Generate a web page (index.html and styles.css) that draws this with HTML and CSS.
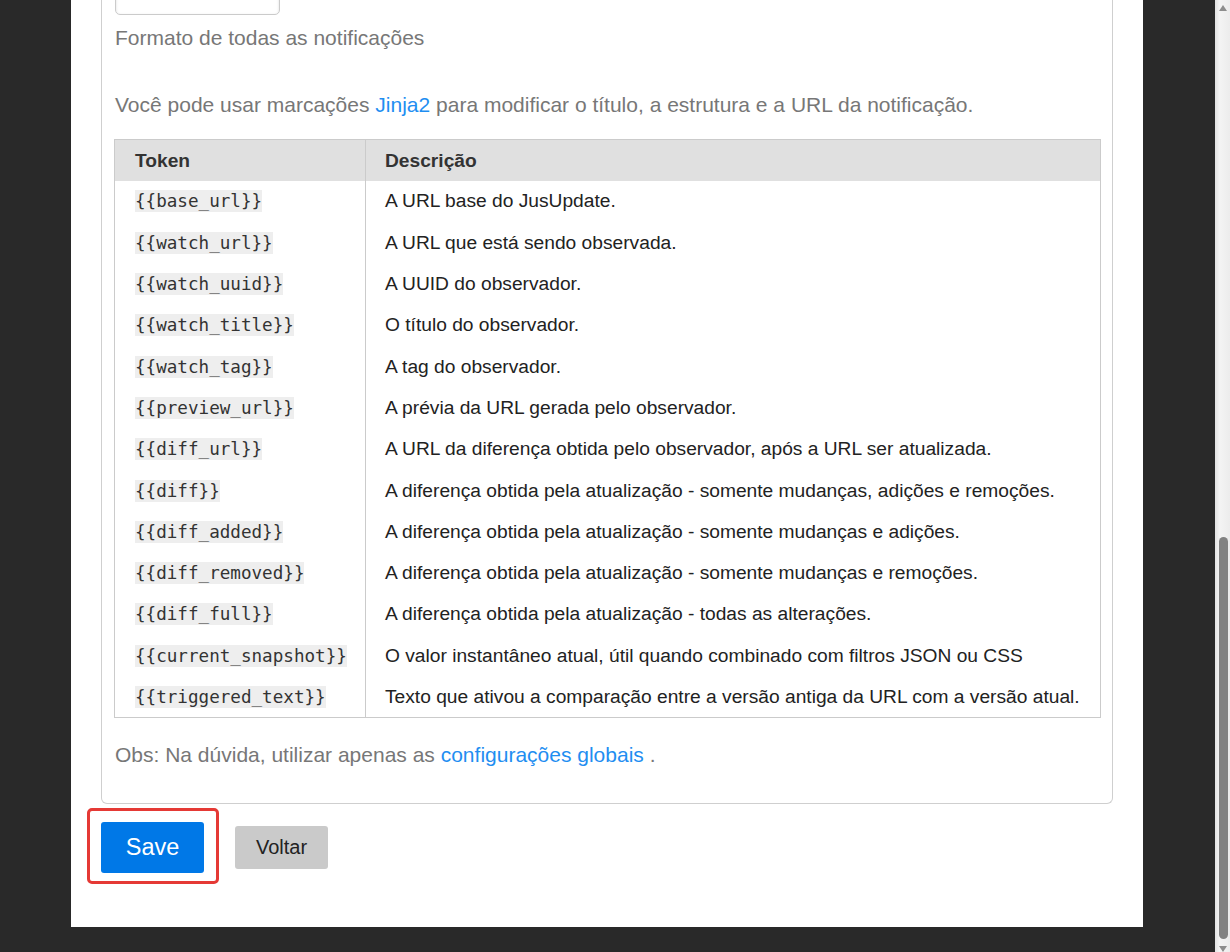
FILE: index.html
```html
<!DOCTYPE html>
<html lang="pt-BR">
<head>
<meta charset="utf-8">
<title>Notificações</title>
<link rel="stylesheet" href="styles.css">
</head>
<body>
<div class="viewport">
  <div class="page">
    <div class="card">
      <div class="fake-input"></div>
      <p class="hint">Formato de todas as notificações</p>
      <p class="hint intro">Você pode usar marcações <a href="#">Jinja2</a> para modificar o título, a estrutura e a URL da notificação.</p>
      <table class="tokens">
        <thead>
          <tr><th class="c1">Token</th><th>Descrição</th></tr>
        </thead>
        <tbody>
          <tr><td><code>{{base_url}}</code></td><td>A URL base do JusUpdate.</td></tr>
          <tr><td><code>{{watch_url}}</code></td><td>A URL que está sendo observada.</td></tr>
          <tr><td><code>{{watch_uuid}}</code></td><td>A UUID do observador.</td></tr>
          <tr><td><code>{{watch_title}}</code></td><td>O título do observador.</td></tr>
          <tr><td><code>{{watch_tag}}</code></td><td>A tag do observador.</td></tr>
          <tr><td><code>{{preview_url}}</code></td><td>A prévia da URL gerada pelo observador.</td></tr>
          <tr><td><code>{{diff_url}}</code></td><td>A URL da diferença obtida pelo observador, após a URL ser atualizada.</td></tr>
          <tr><td><code>{{diff}}</code></td><td>A diferença obtida pela atualização - somente mudanças, adições e remoções.</td></tr>
          <tr><td><code>{{diff_added}}</code></td><td>A diferença obtida pela atualização - somente mudanças e adições.</td></tr>
          <tr><td><code>{{diff_removed}}</code></td><td>A diferença obtida pela atualização - somente mudanças e remoções.</td></tr>
          <tr><td><code>{{diff_full}}</code></td><td>A diferença obtida pela atualização - todas as alterações.</td></tr>
          <tr><td><code>{{current_snapshot}}</code></td><td>O valor instantâneo atual, útil quando combinado com filtros JSON ou CSS</td></tr>
          <tr><td><code>{{triggered_text}}</code></td><td>Texto que ativou a comparação entre a versão antiga da URL com a versão atual.</td></tr>
        </tbody>
      </table>
      <p class="hint obs">Obs: Na dúvida, utilizar apenas as <a href="#">configurações globais</a> .</p>
    </div>
    <div class="actions">
      <div class="highlight"><button class="btn btn-primary">Save</button></div>
      <button class="btn btn-secondary">Voltar</button>
    </div>
  </div>
</div>
<div class="scrollbar">
  <div class="arrow up"></div>
  <div class="track">
    <div class="thumb"></div>
  </div>
  <div class="arrow down"></div>
</div>
</body>
</html>
```

FILE: styles.css
```css
html, body {
  margin: 0;
  padding: 0;
  height: 952px;
  overflow: hidden;
}
body {
  display: flex;
  font-family: "Liberation Sans", Arial, sans-serif;
  background: #292929;
}
.viewport {
  flex: 1;
  overflow: hidden;
  background: #292929;
}
.page {
  width: 1072px;
  margin-left: 71px;
  height: 927px;
  background: #fff;
  padding: 0 30px;
  box-sizing: border-box;
  overflow: hidden;
}
.card {
  border: 1px solid #cfcfcf;
  border-top: none;
  border-radius: 0 0 6px 6px;
  padding: 0 11px 36px 12px;
  margin-top: -25px;
}
.fake-input {
  width: 165px;
  height: 40px;
  margin-left: 1px;
  border: 1px solid #cbcbcb;
  border-radius: 5px;
  box-sizing: border-box;
  box-shadow: inset 0 1px 3px #ddd;
}
.hint {
  margin: 0 0 0 1px;
  color: #777;
  font-size: 21px;
  line-height: 25px;
}
.hint:first-of-type {
  margin-top: 10px;
}
.intro {
  margin-top: 42px;
}
.hint a {
  color: #1f8ef1;
  text-decoration: none;
}
.tokens {
  margin-top: 22px;
  width: 100%;
  border-collapse: collapse;
  border: 1px solid #cbcbcb;
  font-size: 19.2px;
  color: #222;
}
.tokens th,
.tokens td {
  height: 41.3px;
  padding: 0 10px 0 19px;
  text-align: left;
  vertical-align: middle;
  box-sizing: border-box;
}
.tokens th {
  background: #e0e0e0;
  font-weight: bold;
  color: #333;
  border-left: 1px solid #cbcbcb;
  padding-top: 1px;
}
.tokens td + td {
  border-left: 1px solid #cbcbcb;
}
.tokens th.c1,
.tokens td:first-child {
  width: 251px;
  padding-left: 20px;
}
.tokens code {
  font-family: "DejaVu Sans Mono", "Liberation Mono", monospace;
  font-size: 17.6px;
  background: #eee;
  color: #333;
  padding: 1px 0;
  line-height: 22px;
}
.obs {
  margin-top: 24px;
}
.actions {
  display: flex;
  align-items: center;
  margin-top: 4px;
  margin-left: -14px;
}
.highlight {
  border: 3px solid #e53935;
  border-radius: 5px;
  padding: 11px 12px 8px 11px;
}
.btn {
  border: none;
  border-radius: 3px;
  font-family: "Liberation Sans", Arial, sans-serif;
  cursor: pointer;
}
.btn-primary {
  display: block;
  width: 103px;
  height: 51px;
  background: #0078e7;
  color: #fff;
  font-size: 23.5px;
}
.btn-secondary {
  margin-left: 16px;
  width: 93px;
  height: 43px;
  background: #cacaca;
  color: #222;
  font-size: 20px;
  margin-top: 3px;
}
.scrollbar {
  width: 15px;
  height: 952px;
  background: linear-gradient(to right, #e2e2e2, #f4f4f4 30%, #ececec);
  display: flex;
  flex-direction: column;
  align-items: center;
}
.arrow {
  width: 0;
  height: 0;
  border-left: 4.5px solid transparent;
  border-right: 4.5px solid transparent;
}
.arrow.up {
  margin-top: 5px;
  border-bottom: 6px solid #8d8d8d;
}
.arrow.down {
  margin-top: 7px;
  border-top: 6px solid #8d8d8d;
}
.track {
  flex: 1;
  width: 100%;
  display: flex;
  flex-direction: column;
  justify-content: flex-end;
  align-items: center;
}
.thumb {
  width: 9px;
  height: 402px;
  margin-left: 2px;
  background: #828282;
  border-radius: 5px;
}
```
